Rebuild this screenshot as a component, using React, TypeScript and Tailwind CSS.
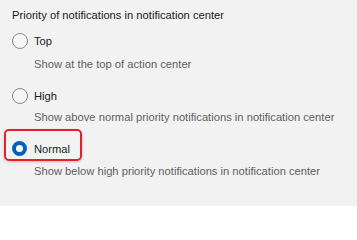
import React from "react";

function Radio({ checked }: { checked?: boolean }) {
  if (checked) {
    return (
      <span className="box-border inline-block h-[15px] w-[15px] shrink-0 rounded-full border-[4.5px] border-[#0063b8] bg-white" />
    );
  }
  return (
    <span className="box-border inline-block h-[16px] w-[16px] shrink-0 rounded-full border border-[#8a8a8a] bg-[#f6f6f6]" />
  );
}

export default function App() {
  return (
    <div className="flex h-[206px] w-[357px] flex-col overflow-hidden bg-[#f2f2f2] pl-[12px] font-['Liberation_Sans',Arial,sans-serif] text-[11.2px] leading-[14px] text-[#1a1a1a]">
      <div className="flex h-[30px] items-center whitespace-nowrap">
        Priority of notifications in notification center
      </div>
      <div className="flex h-[22px] items-center">
        <span className="flex w-[22px] items-center"><Radio /></span>
        <span>Top</span>
      </div>
      <div className="flex h-[24px] items-center whitespace-nowrap pl-[22px] text-[#5f5f5f]">
        Show at the top of action center
      </div>
      <div className="mt-[8px] flex h-[23px] items-center">
        <span className="flex w-[22px] items-center"><Radio /></span>
        <span>High</span>
      </div>
      <div className="flex h-[20px] items-center whitespace-nowrap pl-[22px] text-[#5f5f5f]">
        Show above normal priority notifications in notification center
      </div>
      <div className="relative mt-[10px] flex h-[23px] items-center">
        <span className="pointer-events-none absolute left-[-8px] top-[-8px] h-[32px] w-[78px] rounded-[5px] border-2 border-[#e5202a] shadow-[0_1px_3px_rgba(0,0,0,0.2)]" />
        <span className="flex w-[22px] items-center"><Radio checked /></span>
        <span>Normal</span>
      </div>
      <div className="flex h-[22px] items-center whitespace-nowrap pl-[22px] text-[#5f5f5f]">
        Show below high priority notifications in notification center
      </div>
    </div>
  );
}
